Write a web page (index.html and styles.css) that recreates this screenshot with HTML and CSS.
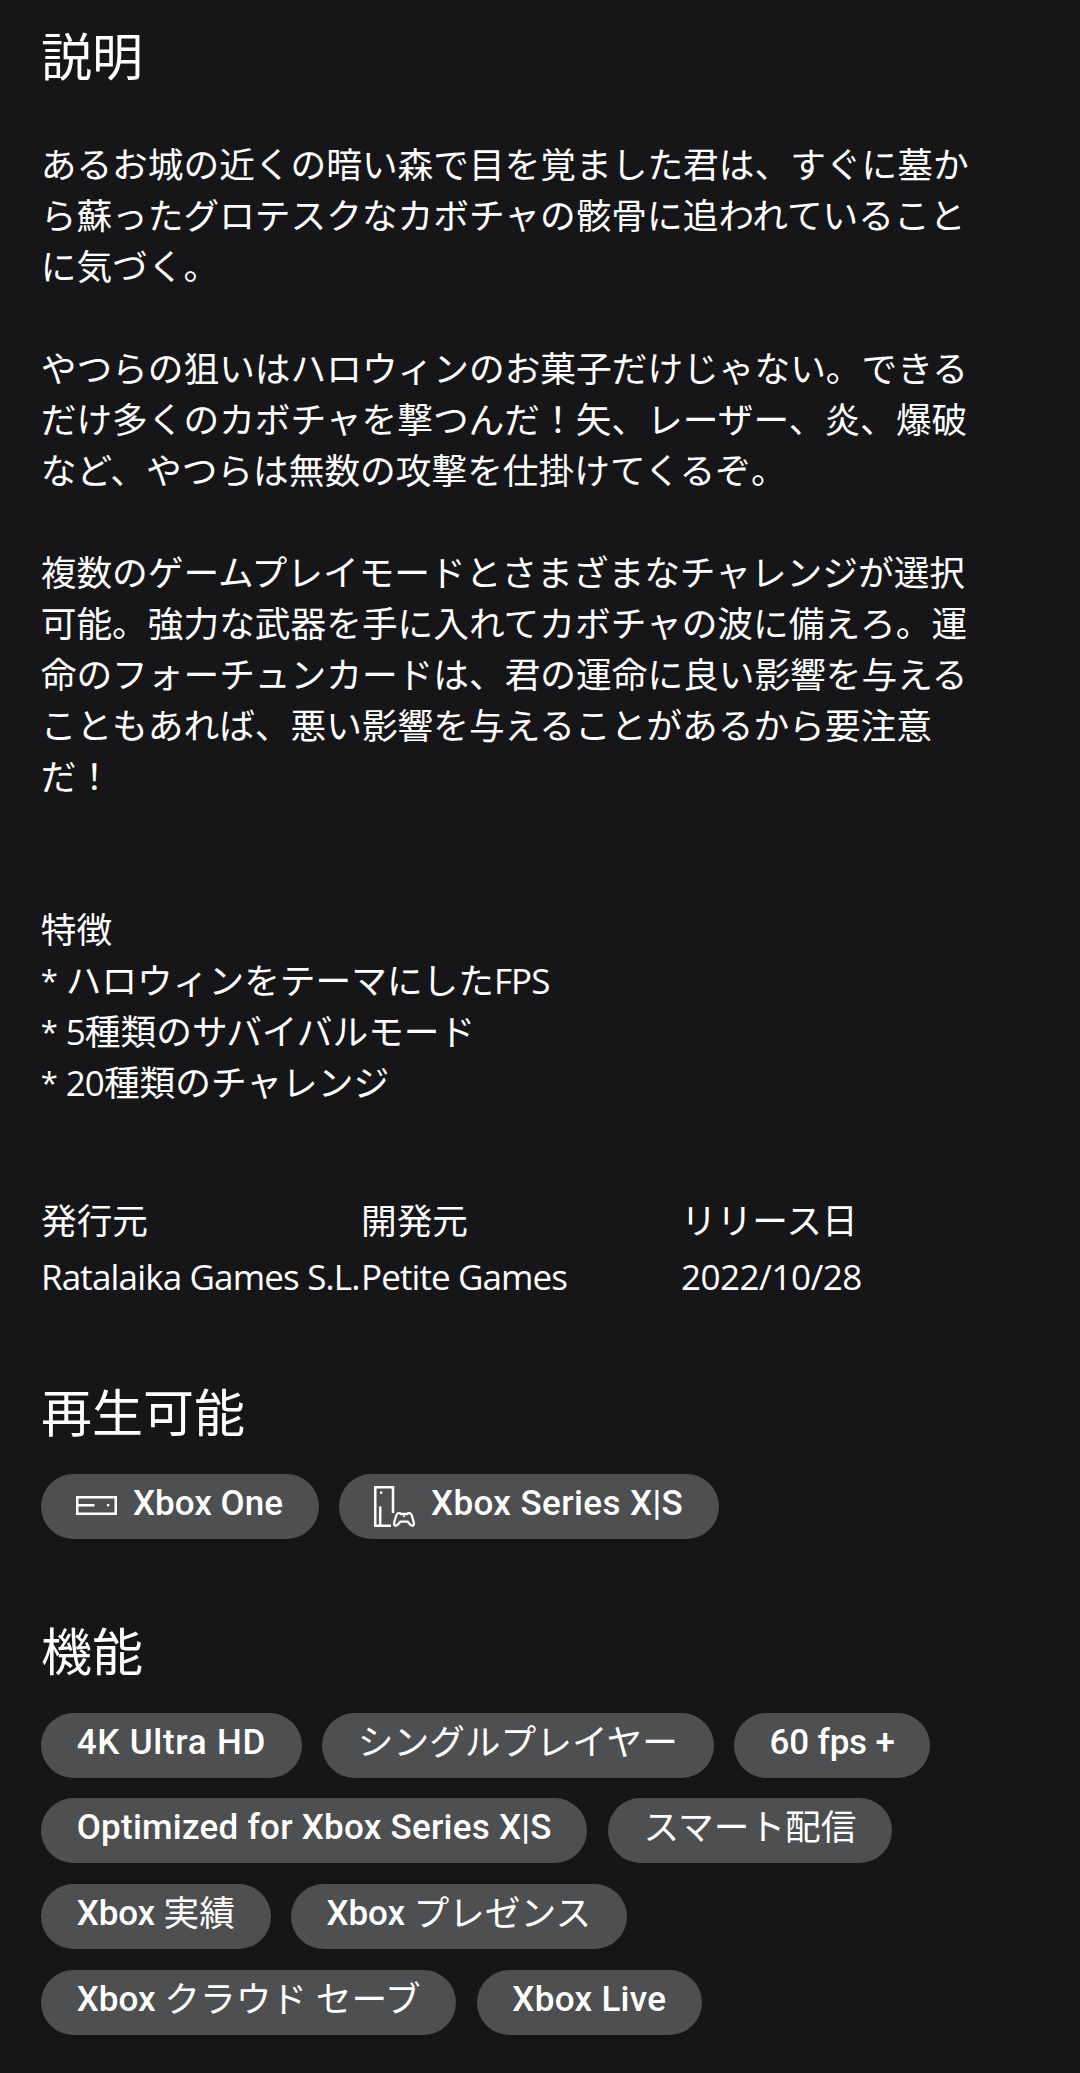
FILE: index.html
```html
<!DOCTYPE html>
<html lang="ja">
<head>
<meta charset="utf-8">
<title>説明</title>
<link rel="stylesheet" href="styles.css">
</head>
<body>
<main class="page">
<section class="about">
<h2 class="heading">説明</h2>
<p class="description">あるお城の近くの暗い森で目を覚ました君は、すぐに墓か
ら蘇ったグロテスクなカボチャの骸骨に追われていること
に気づく。

やつらの狙いはハロウィンのお菓子だけじゃない。できる
だけ多くのカボチャを撃つんだ！矢、レーザー、炎、爆破
など、やつらは無数の攻撃を仕掛けてくるぞ。

複数のゲームプレイモードとさまざまなチャレンジが選択
可能。強力な武器を手に入れてカボチャの波に備えろ。運
命のフォーチュンカードは、君の運命に良い影響を与える
こともあれば、悪い影響を与えることがあるから要注意
だ！


特徴
<span class="star">*</span>ハロウィンをテーマにした<span class="latin">FPS</span>
<span class="star">*</span><span class="latin">5</span>種類のサバイバルモード
<span class="star">*</span><span class="latin">20</span>種類のチャレンジ</p>
</section>
<dl class="facts">
<div class="fact"><dt>発行元</dt><dd class="publisher">Ratalaika Games S.L.</dd></div>
<div class="fact"><dt>開発元</dt><dd>Petite Games</dd></div>
<div class="fact"><dt>リリース日</dt><dd class="date">2022/10/28</dd></div>
</dl>
<section class="playable">
<h2 class="heading">再生可能</h2>
<ul class="tags">
<li class="tag"><svg class="icon" viewBox="0 0 41 41"><path d="M1.250 11.250h38.500v16.500H1.250zM2 19.250h16.500" fill="none" stroke="currentColor" stroke-width="2.500"/><path d="M31 18h2.300v2.300H31z" fill="currentColor"/></svg><b class="din">Xbox One</b></li>
<li class="tag"><svg class="icon" viewBox="0 0 41 41"><path d="M19 27V1.250H1.250v38.500H17M6.200 20.500v19" fill="none" stroke="currentColor" stroke-width="2.500"/><path d="M6 5.500h2.300v2.300H6zM29 29.500h2v1.500h-2z" fill="currentColor"/><path d="M24.500 27.200q1.500-.2 2.500.8h6q1-1 2.500-.8 1.600.2 2.300 2.300l1.900 6.500q.7 3-1 3.600-1.500.4-3-1.600l-2-2.300h-7.400l-2 2.300q-1.500 2-3 1.600-1.700-.6-1-3.600l1.900-6.500q.7-2.100 2.300-2.300z" fill="none" stroke="currentColor" stroke-width="2.300"/></svg><b class="din series">Xbox Series X|S</b></li>
</ul>
</section>
<section class="features">
<h2 class="heading">機能</h2>
<ul class="tags">
<li class="tag"><b class="din uhd">4K Ultra HD</b></li>
<li class="tag"><span>シングルプレイヤー</span></li>
<li class="tag"><b class="din fps">60 fps +</b></li>
<li class="tag"><b class="din optimized">Optimized for Xbox Series X|S</b></li>
<li class="tag"><span>スマート配信</span></li>
<li class="tag"><b class="din xbox">Xbox </b><span>実績</span></li>
<li class="tag"><b class="din xbox">Xbox </b><span>プレゼンス</span></li>
<li class="tag"><b class="din">Xbox </b><span>クラウド</span><b class="din"> </b><span>セーブ</span></li>
<li class="tag"><b class="din live">Xbox Live</b></li>
</ul>
</section>
</main>
</body>
</html>
```
FILE: styles.css
```css
* { box-sizing: border-box; }
body { margin: 0; background: #161618; color: #fff; font-family: "Noto Sans CJK JP", sans-serif; font-size: 35.7px; line-height: 51px; }
.page { width: 1080px; height: 2073px; padding: 21px 41px 0; overflow: hidden; }
.heading { margin: 0; font-size: 51px; font-weight: 400; line-height: 66px; }
.description { margin: 50.4px 0 0 -0.3px; white-space: pre; }

.latin, .star, .fact dd { font-family: "Open Sans", sans-serif; font-size: 35px; letter-spacing: -0.9px; }
.latin { line-height: 0; }
.star { display: inline-block; width: 25px; font-size: 31px; line-height: 0; vertical-align: 2px; }

.facts { display: grid; grid-template-columns: repeat(3, 320px); margin: 87px 0 0; }
.fact dd { margin: 6.6px 0 0; white-space: nowrap; }
.fact .publisher { letter-spacing: -0.85px; }
.fact .date { letter-spacing: -0.5px; }

.playable { margin-top: 75px; }
.features { margin-top: 76.7px; }
.tags { display: flex; flex-wrap: wrap; gap: 20.7px 20.3px; margin: 31px 0 0; padding: 0; list-style: none; }
.tag { display: flex; height: 65px; padding: 0 35.7px; border-radius: 33px; background: #4e4f51; line-height: 53.4px; white-space: pre; }
.icon { width: 41px; height: 41px; margin: 12px 16px 0 -0.7px; }

.din { font-family: Roboto, sans-serif; font-size: 35px; font-weight: 500; line-height: 60px; }
.series { letter-spacing: 0.4px; }
.uhd { letter-spacing: 0.75px; }
.fps { letter-spacing: -0.2px; }
.optimized { letter-spacing: 0.25px; }
.xbox { letter-spacing: -0.15px; }
.live { letter-spacing: 0.3px; }
```
